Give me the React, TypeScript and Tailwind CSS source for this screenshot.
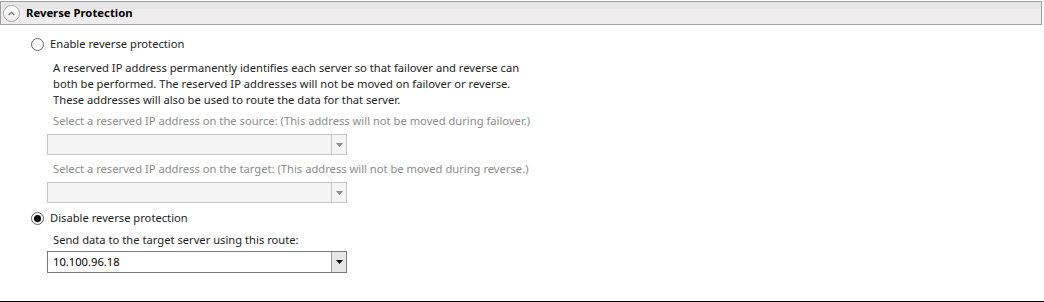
import { ReactNode } from "react";

const font = { fontFamily: '"Noto Sans", "Open Sans", sans-serif' };

function Radio({ checked, children }: { checked?: boolean; children: ReactNode }) {
    return (
        <div className="flex items-center h-4 pl-[31px]">
            <span className="w-[13px] h-[13px] rounded-full border border-[#666] bg-white flex items-center justify-center">
                {checked && <span className="w-[7px] h-[7px] rounded-full bg-black"></span>}
            </span>
            <span className="ml-[6px] text-[11.2px] text-[#1e1e1e]">{children}</span>
        </div>
    );
}

function Dropdown({ value, disabled }: { value?: string; disabled?: boolean }) {
    return (
        <div
            className={
                disabled
                    ? "flex w-[300px] h-[21px] border border-[#c7c7c7] bg-[#f4f4f4]"
                    : "flex w-[300px] h-[22px] border border-[#7a7a7a] bg-white"
            }
        >
            <div className="flex-1 flex items-center pl-[5px] text-[11.2px] text-black">{value}</div>
            <div
                className={
                    disabled
                        ? "w-[15px] flex items-center justify-center border-l border-[#c7c7c7]"
                        : "w-[15px] flex items-center justify-center border-l border-[#9a9a9a] bg-[#e6e6e6]"
                }
            >
                <svg width="7" height="4" viewBox="0 0 7 4">
                    <path d="M0 0 H7 L3.5 4 Z" fill={disabled ? "#8a8a8a" : "#111"} />
                </svg>
            </div>
        </div>
    );
}

export default function App() {
    return (
        <div className="w-[1044px] h-[302px] bg-white relative" style={font}>
            <div className="w-[1042px] h-[24px] mt-[1px] border border-[#a0a0a0] bg-gradient-to-b from-[#e6e6e6] from-30% to-[#efecee] to-30% flex items-center">
                <span className="ml-[2px] w-[17px] h-[17px] rounded-full border border-[#a9a9a9] bg-gradient-to-b from-white to-[#ececec] flex items-center justify-center">
                    <svg width="7" height="5" viewBox="0 0 7 5">
                        <path d="M0.8 4 L3.5 1.3 L6.2 4" stroke="#7a7a7a" strokeWidth="1.3" fill="none" />
                    </svg>
                </span>
                <span className="ml-[6px] text-[11.3px] font-bold text-black">Reverse Protection</span>
            </div>

            <div className="flex flex-col mt-[11px]">
                <Radio>Enable reverse protection</Radio>

                <div className="pl-[53px] mt-2 text-[11.2px] leading-4 text-[#1e1e1e]">
                    <p>A reserved IP address permanently identifies each server so that failover and reverse can</p>
                    <p>both be performed. The reserved IP addresses will not be moved on failover or reverse.</p>
                    <p>These addresses will also be used to route the data for that server.</p>
                </div>

                <div className="pl-[47px] flex flex-col">
                    <p className="pl-[6px] mt-[5px] text-[11.2px] leading-4 text-[#8c8c8c]">
                        Select a reserved IP address on the source: (This address will not be moved during failover.)
                    </p>
                    <div className="mt-[5px]">
                        <Dropdown disabled />
                    </div>
                    <p className="pl-[6px] mt-[6px] text-[11.2px] leading-4 text-[#8c8c8c]">
                        Select a reserved IP address on the target: (This address will not be moved during reverse.)
                    </p>
                    <div className="mt-[5px]">
                        <Dropdown disabled />
                    </div>
                </div>

                <div className="mt-[7px]">
                    <Radio checked>Disable reverse protection</Radio>
                </div>

                <div className="pl-[47px] flex flex-col">
                    <p className="pl-[6px] mt-[6px] text-[11.2px] leading-4 text-[#1e1e1e]">
                        Send data to the target server using this route:
                    </p>
                    <div className="mt-[3px]">
                        <Dropdown value="10.100.96.18" />
                    </div>
                </div>
            </div>

            <div className="absolute left-0 right-0 bottom-0 h-[2px] bg-black"></div>
        </div>
    );
}
